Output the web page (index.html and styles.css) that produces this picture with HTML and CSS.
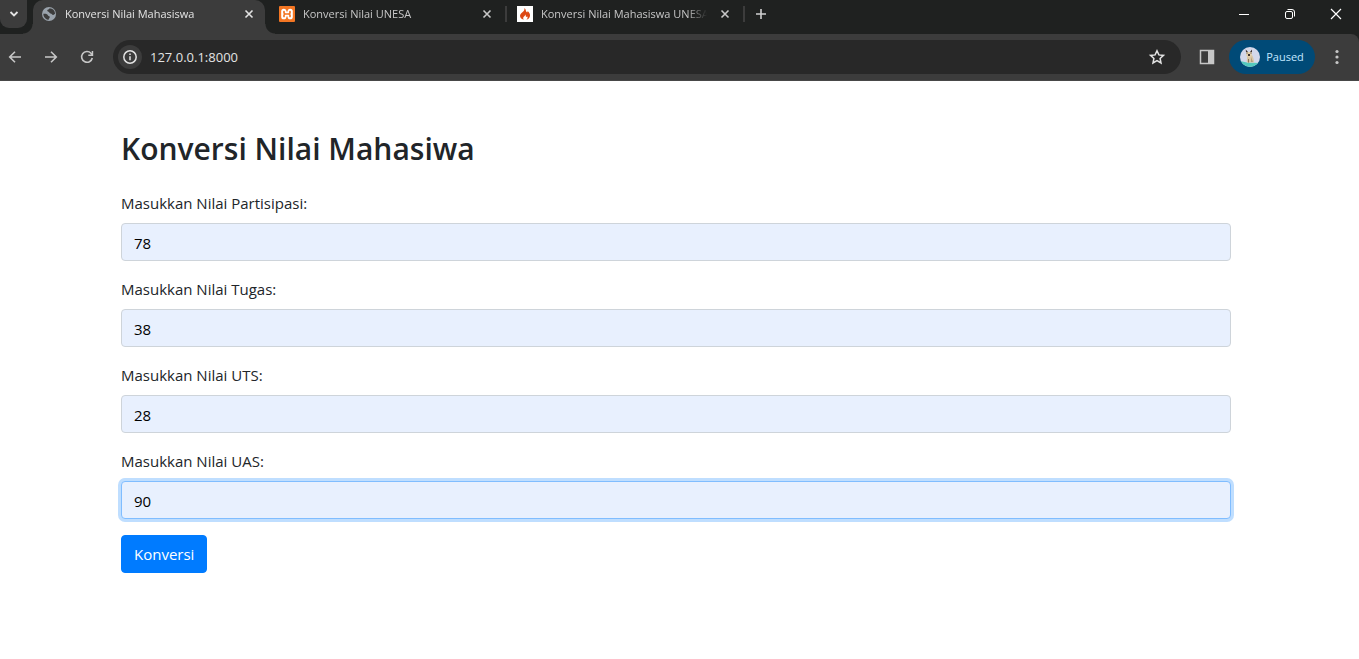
FILE: index.html
```html
<!DOCTYPE html>
<html lang="id">
<head>
<meta charset="utf-8">
<meta name="viewport" content="width=device-width, initial-scale=1">
<title>Konversi Nilai Mahasiswa</title>
<link rel="stylesheet" href="styles.css">
</head>
<body>
<header class="browser">
  <div class="tab-strip">
    <button class="tab-search" type="button" aria-label="Search tabs">
      <svg width="10" height="10" viewBox="0 0 10 10"><path d="M1.500 3l3.500 3.500 3.500-3.500" fill="none" stroke="currentColor" stroke-width="1.800"/></svg>
    </button>
    <div class="tab tab-active">
      <svg class="favicon" width="16" height="16" viewBox="0 0 16 16"><circle cx="8" cy="8" r="7" fill="#9aa3ac"/><path d="M2.500 7.700C5 7.500 6.600 7.900 7 9.400c.5 1 1.900.3 1.800 1.600-.1 1.200-1.300 1.500-1.300 3A6.200 6.200 0 0 1 2.300 7.700zM8.500 2.200c-.3 1-.9 1.300-1.800 1.500-.8.300-.4 1.500.4 1.800 1.400.3 1 1.700 2.400 1.900 1.500.2 1.600 1.500 2.500 1.500.9.100 1.500-.8 2.100-1.200A6.100 6.100 0 0 0 8.500 2.200z" fill="#3c3c3c"/></svg>
      <span class="tab-title">Konversi Nilai Mahasiswa</span>
      <button class="tab-close" type="button" aria-label="Close tab"><svg width="16" height="16" viewBox="0 0 16 16"><path d="M4.500 4.500l7 7m0-7l-7 7" stroke="currentColor" stroke-width="1.600"/></svg></button>
    </div>
    <div class="tab tab-idle tab-first">
      <svg class="favicon" width="16" height="16" viewBox="0 0 16 16" fill="none" stroke-linecap="round"><rect width="16" height="16" rx="1" fill="#f37623"/><path d="M4.800 5.300v5.400M11.200 5.300v5.400M4.800 8h6.400" stroke="#fff" stroke-width="5.200"/><path d="M5 5.500v1.500L6 8 5 9v1.500M11 5.500V7l-1 1 1 1v1.500M6 8h4" stroke="#f37623" stroke-width="1.700"/></svg>
      <span class="tab-title">Konversi Nilai UNESA</span>
      <button class="tab-close" type="button" aria-label="Close tab"><svg width="16" height="16" viewBox="0 0 16 16"><path d="M4.500 4.500l7 7m0-7l-7 7" stroke="currentColor" stroke-width="1.600"/></svg></button>
    </div>
    <div class="tab tab-idle">
      <svg class="favicon" width="16" height="16" viewBox="0 0 16 16"><path fill="#fff" d="M0 0h16v16H0z"/><path d="M7.300 2c2 1.300 1.100 2.900 2.200 4 .8.800 1.300.1 1-.9 1.700 1.200 2.800 2.900 2.500 5-.3 1.900-1.700 3.300-3.800 3.700 1.400-1 1.900-2.400.9-3.600-.3.800-.9.900-1.200.4-.4-.7.100-1.300-.6-2.100-.1 1.600-1.900 1.900-2.100 3.300-.1.900.4 1.600 1 2-2.300-.4-4.200-1.700-4.200-4 0-2.300 2.100-2.900 3.500-4.600C7.400 4.200 7.700 3.100 7.300 2z" fill="#dd4814"/></svg>
      <span class="tab-title">Konversi Nilai Mahasiswa UNESA</span>
      <button class="tab-close" type="button" aria-label="Close tab"><svg width="16" height="16" viewBox="0 0 16 16"><path d="M4.500 4.500l7 7m0-7l-7 7" stroke="currentColor" stroke-width="1.600"/></svg></button>
    </div>
    <button class="new-tab" type="button" aria-label="New tab"><svg width="16" height="16" viewBox="0 0 16 16"><path d="M8 3v10M3 8h10" stroke="currentColor" stroke-width="1.600"/></svg></button>
    <div class="window-controls">
      <button type="button" aria-label="Minimize"><svg width="12" height="12" viewBox="0 0 12 12"><path d="M1 6.500h10" stroke="currentColor"/></svg></button>
      <button type="button" aria-label="Restore"><svg width="12" height="12" viewBox="0 0 12 12" fill="none" stroke="currentColor"><rect x="1.500" y="3.500" width="7" height="7" rx="1.500"/><path d="M3.500 1.500H8a2.500 2.500 0 0 1 2.500 2.500v4.500"/></svg></button>
      <button type="button" aria-label="Close window"><svg width="12" height="12" viewBox="0 0 12 12"><path d="M1 1l10 10M11 1L1 11" stroke="currentColor" stroke-width="1.200"/></svg></button>
    </div>
  </div>
  <div class="toolbar">
    <div class="nav">
      <button type="button" aria-label="Back"><svg width="16" height="16" viewBox="0 0 16 16"><path d="M14 8H3m5-5.300L2.700 8 8 13.300" fill="none" stroke="currentColor" stroke-width="1.600"/></svg></button>
      <button type="button" aria-label="Forward"><svg width="16" height="16" viewBox="0 0 16 16"><path d="M2 8h11M8 2.700L13.300 8 8 13.300" fill="none" stroke="currentColor" stroke-width="1.600"/></svg></button>
      <button type="button" aria-label="Reload"><svg width="16" height="16" viewBox="0 0 16 16"><path d="M13.300 9A5.400 5.400 0 1 1 12 4.200l1.300 1.500" fill="none" stroke="currentColor" stroke-width="1.600"/><path d="M14.200 2v5H9.300V5.500h3.400V2z" fill="currentColor"/></svg></button>
    </div>
    <div class="omnibox">
      <button class="site-info" type="button" aria-label="Site information"><svg width="16" height="16" viewBox="0 0 16 16"><circle cx="8" cy="8" r="6.200" fill="none" stroke="currentColor" stroke-width="1.500"/><path d="M8 7.200v4M8 4.500v1.500" stroke="currentColor" stroke-width="1.500"/></svg></button>
      <input class="url" type="text" value="127.0.0.1:8000" aria-label="Address">
      <button class="bookmark" type="button" aria-label="Bookmark"><svg width="18" height="18" viewBox="0 0 18 18"><path d="M9 2.700l1.900 4.200 4.600.5-3.400 3.100.9 4.500L9 12.700 5 15l.9-4.500-3.400-3.100 4.600-.5z" fill="none" stroke="currentColor" stroke-width="1.500"/></svg></button>
    </div>
    <button class="side-panel" type="button" aria-label="Side panel"><svg width="16" height="16" viewBox="0 0 16 16"><path d="M1.500 1.500h13v13h-13z" fill="none" stroke="currentColor" stroke-width="1.500"/><path d="M9 1h6v14H9z" fill="currentColor"/></svg></button>
    <button class="profile" type="button">
      <svg width="20" height="20" viewBox="0 0 20 20"><defs><clipPath id="face"><circle cx="10" cy="10" r="10"/></clipPath></defs><g clip-path="url(#face)"><path fill="#d3d8ea" d="M0 0h20v20H0z"/><path fill="#53c9bd" d="M0 14l7 1.500 13 .5v4H0z"/><path fill="#d8c6a3" d="M7 8h5c1 2 2 4 2 7.500H7c-.7-2 .5-4 0-7.500z"/><path fill="#e2cfaa" d="M6.300 5h5.400v4L9 10.500 6.300 9z"/><path fill="#40332f" d="M5.700 2.500L8 5H6zM12 2.500L10 5h2zM8 7h2v2H8zM6.500 5.500h1v1h-1zM10.500 5.500h1v1h-1z"/><path fill="#8b7259" d="M11.500 10l1 5h-1zM8 12h1v3.500H8z"/></g></svg>
      <span>Paused</span>
    </button>
    <button class="menu" type="button" aria-label="Menu"><svg width="16" height="16" viewBox="0 0 16 16" fill="currentColor"><circle cx="8" cy="2.500" r="1.600"/><circle cx="8" cy="8" r="1.600"/><circle cx="8" cy="13.500" r="1.600"/></svg></button>
  </div>
</header>
<main class="page">
  <div class="container">
    <h2>Konversi Nilai Mahasiwa</h2>
    <form>
      <div class="form-group"><label for="partisipasi">Masukkan Nilai Partisipasi:</label><input class="form-control" id="partisipasi" type="text" value="78"></div>
      <div class="form-group"><label for="tugas">Masukkan Nilai Tugas:</label><input class="form-control" id="tugas" type="text" value="38"></div>
      <div class="form-group"><label for="uts">Masukkan Nilai UTS:</label><input class="form-control" id="uts" type="text" value="28"></div>
      <div class="form-group"><label for="uas">Masukkan Nilai UAS:</label><input class="form-control is-focused" id="uas" type="text" value="90"></div>
      <button class="btn" type="submit">Konversi</button>
    </form>
  </div>
</main>
</body>
</html>
```
FILE: styles.css
```css
* { box-sizing: border-box; }
body {
  margin: 0;
  background: #fff;
  color: #212529;
  font-family: "Segoe UI", "Open Sans", "Noto Sans", sans-serif;
  font-size: 15px;
  line-height: 24px;
}
button, input { font: inherit; }
svg { display: block; flex: none; }

.browser { background: #1f2120; color: #c7c7c7; font-size: 11px; line-height: 16px; }
.browser button {
  display: flex;
  align-items: center;
  justify-content: center;
  flex: none;
  padding: 0;
  border: 0;
  background: none;
  color: inherit;
}
.tab-strip { display: flex; height: 34px; }
.browser .tab-search {
  width: 27px;
  height: 28px;
  border-radius: 0 0 9px 9px;
  background: #3c3c3c;
  color: #e3e3e3;
}
.tab {
  position: relative;
  display: flex;
  align-items: center;
  height: 34px;
  padding-bottom: 6px;
}
.tab-active {
  width: 232px;
  margin-left: 6px;
  padding-left: 8px;
  padding-right: 8px;
  border-radius: 10px 10px 0 0;
  background: #3c3c3c;
  color: #e3e3e3;
}
.tab-active::before, .tab-active::after {
  content: "";
  position: absolute;
  bottom: 0;
  width: 10px;
  height: 10px;
}
.tab-active::before { right: 100%; background: radial-gradient(circle at 0 0, transparent 9px, #3c3c3c 10px); }
.tab-active::after { left: 100%; background: radial-gradient(circle at 100% 0, transparent 9px, #3c3c3c 10px); }
.tab-idle { width: 238px; padding-left: 10px; padding-right: 12px; }
.tab-first { margin-left: 4px; }
.tab-idle::after {
  content: "";
  position: absolute;
  right: 0;
  top: 6px;
  width: 2px;
  height: 16px;
  background: #3c3c3c;
}
.tab-title {
  flex: 1;
  min-width: 0;
  margin: 0 10px 0 8px;
  overflow: hidden;
  white-space: nowrap;
  -webkit-mask-image: linear-gradient(to left, transparent, #000 20px);
  mask-image: linear-gradient(to left, transparent, #000 20px);
}
.browser .new-tab { width: 32px; height: 28px; color: #d0d0d0; }
.window-controls { display: flex; margin-left: auto; color: #fff; }
.window-controls button { width: 46px; height: 28px; }

.toolbar {
  display: flex;
  align-items: center;
  height: 47px;
  border-bottom: 1px solid #474747;
  border-top-right-radius: 8px;
  background: #3c3c3c;
}
.nav { display: flex; gap: 20px; padding-left: 7px; }
.omnibox {
  display: flex;
  align-items: center;
  flex: 1;
  min-width: 0;
  height: 34px;
  margin-left: 18px;
  padding: 0 15px 0 5px;
  border-radius: 17px;
  background: #282828;
  color: #e3e3e3;
}
.browser .site-info { width: 24px; height: 24px; border-radius: 50%; background: #3c3c3c; }
.url {
  flex: 1;
  min-width: 0;
  margin-left: 8px;
  padding: 0;
  border: 0;
  outline: 0;
  background: none;
  color: #e3e3e3;
  font-size: 13px;
}
.side-panel { margin-left: 18px; }
.browser .profile {
  gap: 6px;
  width: 86px;
  height: 34px;
  margin-left: 14px;
  border-radius: 17px;
  background: #004a77;
  color: #c2e7ff;
}
.menu { margin: 0 14px; }

.page { padding: 48px 7px 48px 0; }
.container { max-width: 1140px; margin: 0 auto; padding: 0 15px; }
h2 { margin: 0 0 22px; font-size: 30px; font-weight: 600; line-height: 40px; }
.form-group { margin-bottom: 16px; }
label { display: block; margin-bottom: 8px; }
.form-control {
  display: block;
  width: 100%;
  height: 38px;
  padding: 7px 12px 5px;
  border: 1px solid #ced4da;
  border-radius: 4px;
  outline: 0;
  background: #e8f0fe;
  color: #000;
}
.is-focused { border-color: #80bdff; box-shadow: 0 0 0 3px #bfdeff; }
.btn {
  padding: 6px 12px;
  border: 1px solid #007bff;
  border-radius: 4px;
  background: #007bff;
  color: #fff;
}
```
